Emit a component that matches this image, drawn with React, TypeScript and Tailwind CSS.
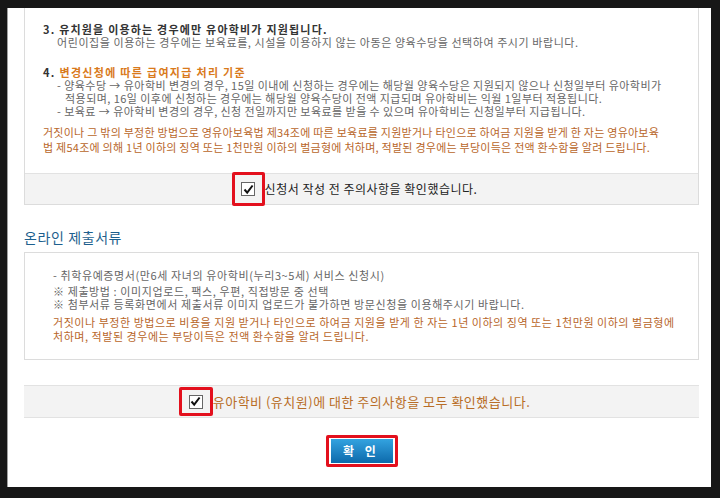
import React from "react";

const font = { fontFamily: '"Noto Sans CJK KR", "Noto Sans", sans-serif' };

function Check({ big }: { big?: boolean }) {
  return (
    <div className={`flex items-center justify-center border-[3px] border-[#e3101d] rounded-[2px] ${big ? "w-[34px] h-[29px]" : "w-[33px] h-[34px]"}`}>
      <div className="w-[14px] h-[14px] bg-white border border-[#666] flex items-center justify-center">
        <svg width="11" height="11" viewBox="0 0 11 11">
          <path d="M1.5 5.5 L4.2 8.6 L9.6 1.5" stroke="#111" strokeWidth="2" fill="none" />
        </svg>
      </div>
    </div>
  );
}

export default function App() {
  return (
    <div className="w-[720px] h-[498px] bg-[#171717] pt-[8px] pl-[7px] pr-[9px] pb-[11px]" style={font}>
      <div className="h-full bg-white border-l border-[#a0a0a0] pl-[16px] pr-[12px] flex flex-col">
        {/* top box */}
        <div className="border-x border-b border-[#dcdcdc] flex flex-col">
          <div className="pl-[18px] pt-[14px] pb-[18px] text-[11px] text-[#666]">
            <div className="leading-[14px] font-bold text-[#333] tracking-[1.2px] whitespace-nowrap">3. 유치원을 이용하는 경우에만 유아학비가 지원됩니다.</div>
            <div className="leading-[13px] pl-[14px] tracking-[0.57px] whitespace-nowrap">어린이집을 이용하는 경우에는 보육료를, 시설을 이용하지 않는 아동은 양육수당을 선택하여 주시기 바랍니다.</div>
            <div className="mt-[16px] leading-[14px] font-bold text-[#333] tracking-[1.3px] whitespace-nowrap">
              4. <span className="text-[#d97a1c]">변경신청에 따른 급여지급 처리 기준</span>
            </div>
            <div className="leading-[13px] pl-[14px] tracking-[0.45px] whitespace-nowrap">- 양육수당 → 유아학비 변경의 경우, 15일 이내에 신청하는 경우에는 해당월 양육수당은 지원되지 않으나 신청일부터 유아학비가</div>
            <div className="leading-[13px] pl-[22px] tracking-[0.45px] whitespace-nowrap">적용되며, 16일 이후에 신청하는 경우에는 해당월 양육수당이 전액 지급되며 유아학비는 익월 1일부터 적용됩니다.</div>
            <div className="leading-[13px] pl-[14px] tracking-[0.45px] whitespace-nowrap">- 보육료 → 유아학비 변경의 경우, 신청 전일까지만 보육료를 받을 수 있으며 유아학비는 신청일부터 지급됩니다.</div>
            <div className="mt-[7px] leading-[15px] text-[#b8662a] tracking-[0.25px] whitespace-nowrap">
              <div>거짓이나 그 밖의 부정한 방법으로 영유아보육법 제34조에 따른 보육료를 지원받거나 타인으로 하여금 지원을 받게 한 자는 영유아보육</div>
              <div>법 제54조에 의해 1년 이하의 징역 또는 1천만원 이하의 벌금형에 처하며, 적발된 경우에는 부당이득은 전액 환수함을 알려 드립니다.</div>
            </div>
          </div>
          <div className="h-[31px] bg-[#f3f3f3] border-t border-[#e2e2e2] flex items-center justify-center pr-[14px]">
            <Check />
            <span className="text-[12px] text-[#222] tracking-[0.5px] whitespace-nowrap">신청서 작성 전 주의사항을 확인했습니다.</span>
          </div>
        </div>

        <div className="mt-[22px] text-[14px] leading-[20px] text-[#1d5f8e] tracking-[0.6px]">온라인 제출서류</div>

        {/* second box */}
        <div className="mt-[5px] border border-[#dcdcdc] pl-[28px] pt-[15px] pb-[16px] text-[11px] text-[#666] tracking-[0.6px]">
          <div className="leading-[14px] whitespace-nowrap">- 취학유예증명서(만6세 자녀의 유아학비(누리3~5세) 서비스 신청시)</div>
          <div className="mt-[3px] leading-[13px] whitespace-nowrap">※ 제출방법 : 이미지업로드, 팩스, 우편, 직접방문 중 선택</div>
          <div className="leading-[13px] whitespace-nowrap">※ 첨부서류 등록화면에서 제출서류 이미지 업로드가 불가하면 방문신청을 이용해주시기 바랍니다.</div>
          <div className="mt-[4px] leading-[14px] text-[#b8662a] tracking-[0.54px] whitespace-nowrap">
            <div>거짓이나 부정한 방법으로 비용을 지원 받거나 타인으로 하여금 지원을 받게 한 자는 1년 이하의 징역 또는 1천만원 이하의 벌금형에</div>
            <div>처하며, 적발된 경우에는 부당이득은 전액 환수함을 알려 드립니다.</div>
          </div>
        </div>

        {/* bottom bar */}
        <div className="mt-[25px] h-[33px] bg-[#f3f3f3] border-y border-[#e2e2e2] flex items-center justify-center pr-[14px]">
          <Check big />
          <span className="text-[13px] text-[#b86d26] tracking-[0.5px] whitespace-nowrap">유아학비 (유치원)에 대한 주의사항을 모두 확인했습니다.</span>
        </div>

        <div className="mt-[17px] flex justify-center">
          <div className="border-[3px] border-[#e3101d] px-[2px] py-[1px] rounded-[2px]">
            <div className="w-[62px] h-[24px] bg-gradient-to-b from-[#33a3e0] to-[#0c6aab] flex items-center justify-center text-white text-[12px] font-bold tracking-[4px]">
              확 인
            </div>
          </div>
        </div>
      </div>
    </div>
  );
}
